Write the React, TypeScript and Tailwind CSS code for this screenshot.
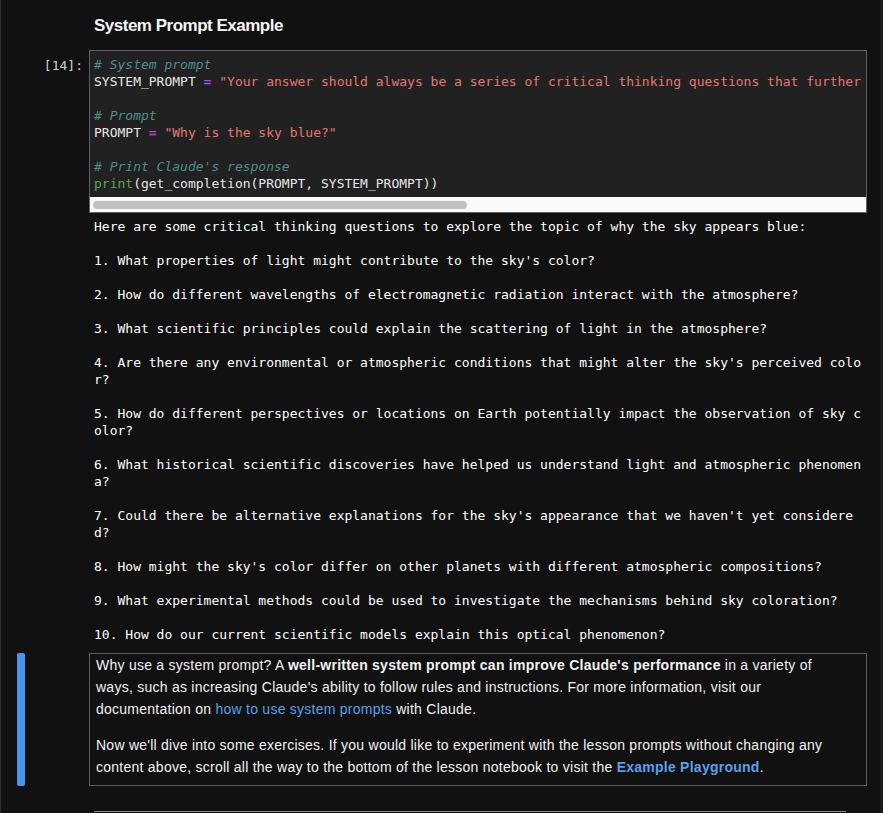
import React from 'react'

const mono = "font-['DejaVu_Sans_Mono','Liberation_Mono',monospace]"
const sans = "font-['Liberation_Sans','Noto_Sans',sans-serif]"

const answers = [
  'Here are some critical thinking questions to explore the topic of why the sky appears blue:',
  "1. What properties of light might contribute to the sky's color?",
  '2. How do different wavelengths of electromagnetic radiation interact with the atmosphere?',
  '3. What scientific principles could explain the scattering of light in the atmosphere?',
  "4. Are there any environmental or atmospheric conditions that might alter the sky's perceived color?",
  '5. How do different perspectives or locations on Earth potentially impact the observation of sky color?',
  '6. What historical scientific discoveries have helped us understand light and atmospheric phenomena?',
  "7. Could there be alternative explanations for the sky's appearance that we haven't yet considered?",
  "8. How might the sky's color differ on other planets with different atmospheric compositions?",
  '9. What experimental methods could be used to investigate the mechanisms behind sky coloration?',
  '10. How do our current scientific models explain this optical phenomenon?',
]

function Comment({ children }: { children: React.ReactNode }) {
  return <span className="italic text-[#4e8e8e]">{children}</span>
}

function Str({ children }: { children: React.ReactNode }) {
  return <span className="text-[#e5766e]">{children}</span>
}

function Eq() {
  return <span className="font-bold text-[#a94ee6]">=</span>
}

function CodeCell() {
  return (
    <div className="flex">
      <div className={`w-[88px] shrink-0 pr-[6px] pt-[7px] text-right text-[13px] leading-[17px] text-[#cfcfcf] ${mono}`}>
        [14]:
      </div>
      <div className="w-[778px] border border-[#5f5f5f] bg-[#212121]">
        <pre className={`overflow-hidden whitespace-pre px-[4px] pt-[5px] pb-[5px] text-[13px] leading-[17px] text-[#e6e6e6] ${mono}`}>
          <Comment># System prompt</Comment>
          {'\n'}SYSTEM_PROMPT <Eq />{' '}
          <Str>
            "Your answer should always be a series of critical thinking questions that further the conversation (do
            not provide answers to your questions). Do not actually answer the user question."
          </Str>
          {'\n\n'}
          <Comment># Prompt</Comment>
          {'\n'}PROMPT <Eq /> <Str>"Why is the sky blue?"</Str>
          {'\n\n'}
          <Comment># Print Claude's response</Comment>
          {'\n'}
          <span className="text-[#5fa352]">print</span>(get_completion(PROMPT, SYSTEM_PROMPT))
        </pre>
        {/* horizontal scrollbar */}
        <div className="flex h-[15px] items-center bg-[#fafafa] px-[3px]">
          <div className="h-[8px] w-[374px] rounded-full bg-[#c1c1c1]" />
        </div>
      </div>
    </div>
  )
}

function Output() {
  return (
    <pre
      className={`ml-[93px] w-[772px] whitespace-pre-wrap break-all pt-[5px] text-[13px] leading-[17px] text-white ${mono}`}
    >
      {answers.join('\n\n')}
    </pre>
  )
}

function MarkdownCell() {
  return (
    <div className="mt-[10px] flex">
      <div className="flex w-[88px] shrink-0 pl-[16px]">
        <div className="w-[8px] rounded-[2px] bg-[#4a93ea]" />
      </div>
      <div
        className={`w-[778px] border border-[#5a5a5a] pl-[6px] pr-[8px] pb-[7px] text-[14px] leading-[22px] tracking-[0.25px] text-[#f2f2f2] ${sans}`}
      >
        <p className="whitespace-nowrap">
          Why use a system prompt? A <b>well-written system prompt can improve Claude's performance</b> in a variety of
          <br />
          ways, such as increasing Claude's ability to follow rules and instructions. For more information, visit our
          <br />
          documentation on <span className="text-[#58a0ea]">how to use system prompts</span> with Claude.
        </p>
        <p className="mt-[14px] whitespace-nowrap">
          Now we'll dive into some exercises. If you would like to experiment with the lesson prompts without changing
          any
          <br />
          content above, scroll all the way to the bottom of the lesson notebook to visit the{' '}
          <b className="text-[#58a0ea]">Example Playground</b>.
        </p>
      </div>
    </div>
  )
}

export default function App() {
  return (
    <div className="flex h-[813px] w-[883px] overflow-hidden bg-[#111111]">
      <div className="flex-1 border-l border-[#2e2e2e]">
        <h2
          className={`h-[50px] pl-[93px] pt-[14px] text-[17px] font-bold leading-[24px] tracking-[-0.5px] text-[#f5f5f5] ${sans}`}
        >
          System Prompt Example
        </h2>
        <CodeCell />
        <Output />
        <MarkdownCell />
        <div className="ml-[93px] mt-[25px] h-[20px] w-[752px] border-t border-[#8a8a8a]" />
      </div>
      <div className="w-[3px] bg-[#1c1c1c]" />
    </div>
  )
}
